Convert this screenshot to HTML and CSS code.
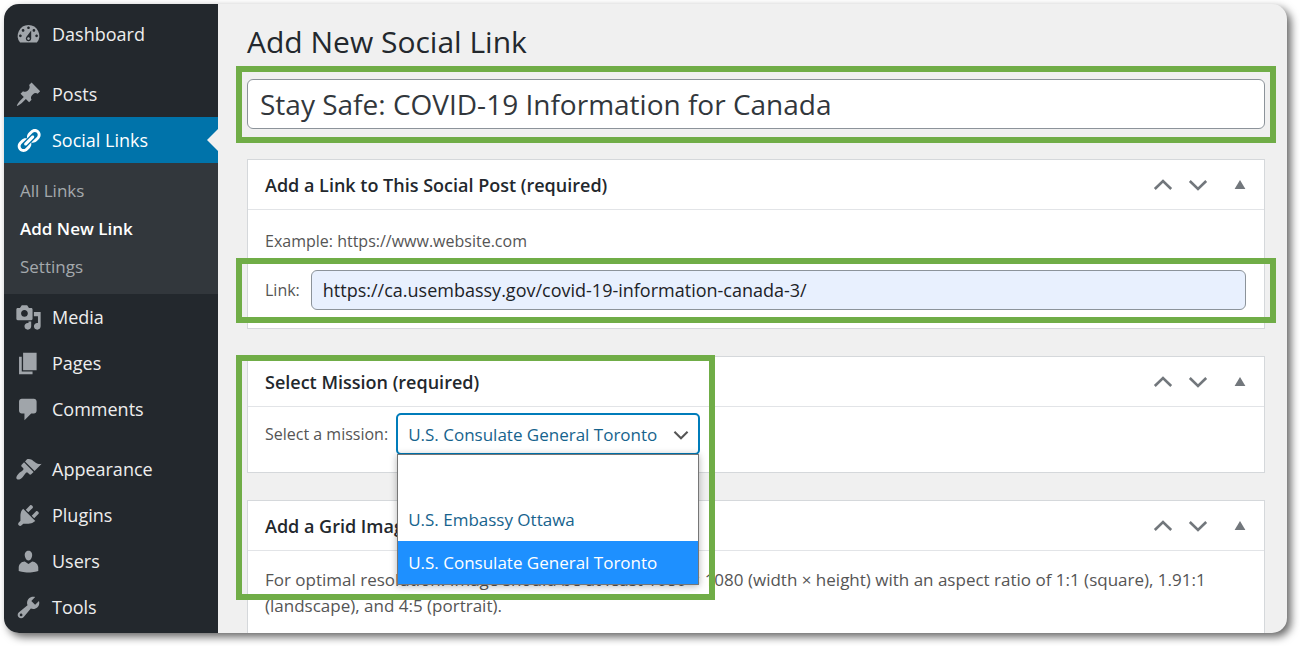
FILE: index.html
```html
<!DOCTYPE html>
<html lang="en">
<head>
<meta charset="utf-8">
<meta name="viewport" content="width=device-width, initial-scale=1">
<title>Add New Social Link</title>
<link rel="stylesheet" href="styles.css">
</head>
<body>
<svg class="sprite" aria-hidden="true">
  <symbol id="up" viewBox="0 0 20 20"><path d="M1.800 14 10 6l8.200 8" fill="none" stroke="currentColor" stroke-width="2.600"/></symbol>
  <symbol id="down" viewBox="0 0 20 20"><path d="M1.800 6 10 14l8.200-8" fill="none" stroke="currentColor" stroke-width="2.600"/></symbol>
  <symbol id="toggle" viewBox="0 0 20 20"><path d="M10 5 15.400 14H4.600z" fill="currentColor"/></symbol>
</svg>
<div class="shell">
  <nav class="sidebar" aria-label="Main menu">
    <a class="item" href="#"><svg class="icon" viewBox="0 0 20 20"><path d="M3.760 16h12.480A7.998 7.998 0 0 0 10 3a7.998 7.998 0 0 0-6.240 13zM10 4c.55 0 1 .45 1 1s-.45 1-1 1-1-.45-1-1 .45-1 1-1zM6 6c.55 0 1 .45 1 1s-.45 1-1 1-1-.45-1-1 .45-1 1-1zm8 0c.55 0 1 .45 1 1s-.45 1-1 1-1-.45-1-1 .45-1 1-1zm-5.370 5.550L12 7v6c0 1.100-.9 2-2 2s-2-.9-2-2c0-.57.24-1.080.63-1.450zM4 10c.55 0 1 .45 1 1s-.45 1-1 1-1-.45-1-1 .45-1 1-1zm12 0c.55 0 1 .45 1 1s-.45 1-1 1-1-.45-1-1 .45-1 1-1zm-5 3c0-.55-.45-1-1-1s-1 .45-1 1 .45 1 1 1 1-.45 1-1z"/></svg>Dashboard</a>
    <a class="item group" href="#"><svg class="icon" viewBox="0 0 20 20"><path d="M10.440 3.020l1.820-1.820 6.360 6.350-1.830 1.820c-1.050-.68-2.480-.57-3.410.36l-.75.75c-.92.93-1.040 2.350-.35 3.410l-1.830 1.820-2.410-2.410-2.800 2.790c-.42.42-3.380 2.710-3.800 2.290s1.860-3.390 2.280-3.810l2.790-2.790L4.100 9.360l1.830-1.820c1.050.69 2.480.57 3.400-.36l.75-.75c.93-.92 1.050-2.350.36-3.410z"/></svg>Posts</a>
    <a class="item current" href="#"><svg class="icon" viewBox="0 0 20 20"><path d="M17.740 2.760c1.680 1.690 1.680 4.410 0 6.100l-1.530 1.520c-1.120 1.120-2.700 1.470-4.140 1.090l2.620-2.610.76-.77.76-.76c.84-.84.84-2.200 0-3.040-.84-.85-2.200-.85-3.040 0l-.77.76-3.380 3.380c-.37-1.440-.02-3.020 1.100-4.140l1.520-1.530c1.690-1.680 4.420-1.680 6.100 0zM8.590 13.430l5.340-5.340c.42-.42.42-1.100 0-1.520-.44-.43-1.130-.39-1.530 0l-5.330 5.340c-.42.42-.42 1.100 0 1.520.44.43 1.130.39 1.520 0zm-.76 2.290l4.140-4.150c.38 1.440.03 3.020-1.090 4.140l-1.520 1.530c-1.690 1.680-4.410 1.680-6.100 0-1.680-1.680-1.680-4.420 0-6.100l1.530-1.520c1.120-1.120 2.700-1.470 4.140-1.100l-4.140 4.150c-.85.84-.85 2.200 0 3.050.84.84 2.200.84 3.040 0z"/></svg>Social Links</a>
    <div class="submenu">
      <a class="subitem" href="#">All Links</a>
      <a class="subitem active" href="#" aria-current="page">Add New Link</a>
      <a class="subitem" href="#">Settings</a>
    </div>
    <a class="item" href="#"><svg class="icon" viewBox="0 0 20 20"><path d="M13 11V4c0-.55-.45-1-1-1h-1.670L9 1H5L3.670 3H2c-.55 0-1 .45-1 1v7c0 .55.45 1 1 1h10c.55 0 1-.45 1-1zM7 4.500c1.380 0 2.500 1.120 2.500 2.500S8.380 9.500 7 9.500 4.500 8.380 4.500 7 5.620 4.500 7 4.500zM14 6h5v10.500c0 1.380-1.120 2.500-2.500 2.500S14 17.880 14 16.500s1.120-2.500 2.500-2.500c.17 0 .34.02.5.05V9h-3V6zm-4 8.050V13h2v3.500c0 1.380-1.120 2.500-2.500 2.500S7 17.880 7 16.500 8.120 14 9.500 14c.17 0 .34.02.5.05z"/></svg>Media</a>
    <a class="item" href="#"><svg class="icon" viewBox="0 0 20 20"><path d="M6 15V2h10v13H6zm-1 1h8v2H3V5h2v11z"/></svg>Pages</a>
    <a class="item" href="#"><svg class="icon" viewBox="0 0 20 20"><path d="M5 2h9c1.100 0 2 .9 2 2v7c0 1.100-.9 2-2 2h-2l-5 5v-5H5c-1.100 0-2-.9-2-2V4c0-1.100.9-2 2-2z"/></svg>Comments</a>
    <a class="item group" href="#"><svg class="icon" viewBox="0 0 20 20"><path d="M14.480 11.060L7.410 3.990l1.500-1.500c.5-.56 2.300-.47 3.510.32 1.210.8 1.430 1.280 2.910 2.100 1.180.64 2.450 1.260 4.450.85zm-.71.71L6.700 4.700 4.930 6.470c-.39.39-.39 1.020 0 1.410l1.060 1.060c.39.39.39 1.030 0 1.420-.6.6-1.430 1.110-2.210 1.690-.35.26-.7.53-1.010.84C1.430 14.230.4 16.080 1.400 17.070c.99 1 2.840-.03 4.180-1.360.31-.31.58-.66.85-1.020.57-.78 1.080-1.610 1.690-2.210.39-.39 1.020-.39 1.410 0l1.060 1.060c.39.39 1.020.39 1.410 0z"/></svg>Appearance</a>
    <a class="item" href="#"><svg class="icon" viewBox="0 0 20 20"><path d="M13.110 4.360L9.870 7.600 8 5.730l3.240-3.240c.35-.34 1.050-.2 1.560.32.52.51.66 1.210.31 1.550zm-8 1.770l.91-1.120 9.010 9.010-1.190.84c-.71.71-2.630 1.160-3.820 1.160H6.140L4.900 17.260c-.59.59-1.540.59-2.120 0-.59-.58-.59-1.530 0-2.120l1.240-1.240v-3.880c0-1.130.4-3.190 1.090-3.890zm7.260 3.970l3.240-3.240c.34-.35 1.040-.21 1.550.31.52.51.66 1.210.31 1.550l-3.240 3.250z"/></svg>Plugins</a>
    <a class="item" href="#"><svg class="icon" viewBox="0 0 20 20"><path d="M10 9.250c-2.270 0-2.730-3.440-2.730-3.440C7 4.020 7.820 2 9.970 2c2.160 0 2.980 2.020 2.710 3.810 0 0-.41 3.440-2.680 3.440zm0 2.570L12.720 10c2.390 0 4.520 2.330 4.520 4.530v2.490s-3.650 1.130-7.240 1.130c-3.650 0-7.240-1.130-7.240-1.130v-2.490c0-2.250 1.940-4.480 4.470-4.480z"/></svg>Users</a>
    <a class="item" href="#"><svg class="icon" viewBox="0 0 20 20"><path d="M16.680 9.770c-1.340 1.340-3.300 1.670-4.950.99l-5.410 6.520c-.99.99-2.590.99-3.580 0s-.99-2.590 0-3.570l6.520-5.420c-.68-1.650-.35-3.610.99-4.950 1.280-1.280 3.120-1.620 4.720-1.060l-2.890 2.890 2.820 2.820 2.860-2.870c.53 1.580.18 3.390-1.080 4.650zM3.810 16.210c.4.39 1.040.39 1.430 0 .4-.4.4-1.040 0-1.430-.39-.4-1.030-.4-1.430 0-.39.39-.39 1.030 0 1.430z"/></svg>Tools</a>
  </nav>
  <main class="main">
    <h1 class="page-title">Add New Social Link</h1>
    <div class="title-field marked">
      <input class="title-input" type="text" aria-label="Title" value="Stay Safe: COVID-19 Information for Canada">
    </div>

    <section class="box">
      <header class="box-head">
        <h2 class="box-title">Add a Link to This Social Post (required)</h2>
        <button class="ctl" type="button" aria-label="Move up"><svg viewBox="0 0 20 20"><use href="#up"/></svg></button>
        <button class="ctl" type="button" aria-label="Move down"><svg viewBox="0 0 20 20"><use href="#down"/></svg></button>
        <button class="ctl toggle" type="button" aria-label="Toggle panel"><svg viewBox="0 0 20 20"><use href="#toggle"/></svg></button>
      </header>
      <div class="box-body">
        <p class="hint">Example: https://www.website.com</p>
        <div class="link-row marked">
          <label for="link">Link:</label>
          <input class="link-input" id="link" type="text" value="https://ca.usembassy.gov/covid-19-information-canada-3/">
        </div>
      </div>
    </section>

    <section class="box mission marked">
      <header class="box-head">
        <h2 class="box-title">Select Mission (required)</h2>
        <button class="ctl" type="button" aria-label="Move up"><svg viewBox="0 0 20 20"><use href="#up"/></svg></button>
        <button class="ctl" type="button" aria-label="Move down"><svg viewBox="0 0 20 20"><use href="#down"/></svg></button>
        <button class="ctl toggle" type="button" aria-label="Toggle panel"><svg viewBox="0 0 20 20"><use href="#toggle"/></svg></button>
      </header>
      <div class="box-body mission-body">
        <label for="mission">Select a mission:</label>
        <div class="picker">
          <select class="picker-select" id="mission">
            <option></option>
            <option>U.S. Embassy Ottawa</option>
            <option selected>U.S. Consulate General Toronto</option>
          </select>
          <svg class="picker-arrow" viewBox="0 0 20 20" aria-hidden="true"><use href="#down"/></svg>
          <ul class="menu" role="listbox" aria-label="Missions">
            <li class="option" role="option"></li>
            <li class="option" role="option">U.S. Embassy Ottawa</li>
            <li class="option selected" role="option" aria-selected="true">U.S. Consulate General Toronto</li>
          </ul>
        </div>
      </div>
    </section>

    <section class="box last">
      <header class="box-head">
        <h2 class="box-title">Add a Grid Image</h2>
        <button class="ctl" type="button" aria-label="Move up"><svg viewBox="0 0 20 20"><use href="#up"/></svg></button>
        <button class="ctl" type="button" aria-label="Move down"><svg viewBox="0 0 20 20"><use href="#down"/></svg></button>
        <button class="ctl toggle" type="button" aria-label="Toggle panel"><svg viewBox="0 0 20 20"><use href="#toggle"/></svg></button>
      </header>
      <div class="box-body note-body">
        <p class="note">For optimal resolution. Image should be at least 1080 × 1080 (width × height) with an aspect ratio of 1:1 (square), 1.91:1 (landscape), and 4:5 (portrait).</p>
      </div>
    </section>
  </main>
</div>
</body>
</html>
```
FILE: styles.css
```css
*, *::before, *::after { box-sizing: border-box; }

body {
  margin: 0;
  padding: 4px 13px 13px 4px;
  background: #fff;
  color: #555;
  font-family: "Open Sans", "Noto Sans", sans-serif;
  font-size: 16px;
  line-height: 26px;
}

input, select, button { font: inherit; }

.sprite { display: none; }

.shell {
  display: grid;
  grid-template-columns: 214px 1fr;
  min-height: calc(100vh - 17px);
  overflow: hidden;
  border-radius: 15px;
  background: #f0f0f0;
  box-shadow: 4px 4px 8px rgba(0, 0, 0, 0.6);
}

/* Sidebar */
.sidebar {
  padding-top: 7px;
  background: #23282d;
}

.item {
  display: flex;
  align-items: center;
  gap: 10px;
  height: 46px;
  padding-left: 11px;
  color: #eee;
  font-size: 18px;
  text-decoration: none;
}

.item.group { margin-top: 14px; }

.icon {
  width: 27px;
  height: 27px;
  fill: #a0a5aa;
}

.item.current {
  position: relative;
  background: #0073aa;
  color: #fff;
}

.item.current .icon { fill: #fff; }

.item.current::after {
  content: "";
  position: absolute;
  right: 0;
  top: 12px;
  border: 11px solid transparent;
  border-left: 0;
  border-right-color: #f0f0f0;
}

.submenu {
  padding: 9px 0 8px 16px;
  background: #32373c;
}

.subitem {
  display: block;
  color: #a4a9ad;
  font-size: 17px;
  line-height: 38px;
  text-decoration: none;
}

.subitem.active {
  color: #fff;
  font-weight: 600;
}

/* Main column */
.main {
  display: flex;
  flex-direction: column;
  padding: 15px 22px 0 29px;
}

.page-title {
  margin: 0 0 14px;
  color: #23282d;
  font-size: 30px;
  font-weight: 400;
  line-height: 46px;
}

.title-field { margin-bottom: 30px; }

.title-input {
  display: block;
  width: 100%;
  height: 50px;
  padding: 0 12px;
  border: 1px solid #8c939a;
  border-radius: 6px;
  background: #fff;
  color: #32373c;
  font-size: 28px;
}

/* Green call-out frames */
.marked { position: relative; }

.marked::after {
  content: "";
  position: absolute;
  z-index: 3;
  border: 6px solid #70ad47;
  pointer-events: none;
}

.title-field::after { inset: -13px -11px -14px; }
.link-row::after { inset: -12px -30px -13px -29px; }

.mission::after {
  top: -2px;
  left: -12px;
  width: 479px;
  height: 245px;
}

/* Panels */
.box {
  margin-bottom: 27px;
  border: 1px solid #d5d8db;
  background: #fff;
}

.box.last {
  flex: 1;
  margin-bottom: 0;
  border-bottom: 0;
}

.box-head {
  display: flex;
  align-items: center;
  height: 50px;
  padding-right: 14px;
  padding-left: 17px;
  border-bottom: 1px solid #e2e4e7;
}

.box-title {
  flex: 1;
  margin: 0;
  color: #23282d;
  font-size: 18px;
  font-weight: 600;
}

.ctl {
  display: flex;
  margin-left: 15px;
  padding: 0;
  border: 0;
  background: none;
  color: #72777c;
}

.ctl.toggle { margin-left: 22px; }

.ctl svg {
  width: 20px;
  height: 20px;
}

.box-body { padding: 18px 18px 18px 17px; }

.hint { margin: 0; }

.note-body {
  padding-top: 16px;
  padding-bottom: 0;
}

.note {
  margin: 0;
  font-size: 17px;
}

.link-row {
  display: flex;
  align-items: center;
  gap: 11px;
  margin-top: 16px;
}

.link-input {
  flex: 1;
  min-width: 0;
  height: 40px;
  padding: 0 11px;
  border: 1px solid #8c939a;
  border-radius: 6px;
  background: #e8f0fe;
  color: #1d2327;
  font-size: 18px;
}

.mission-body {
  display: flex;
  align-items: center;
  gap: 8px;
  padding-top: 6px;
  padding-bottom: 17px;
}

.picker {
  position: relative;
  width: 304px;
}

.picker-select {
  display: block;
  width: 100%;
  height: 42px;
  padding: 2px 28px 0 10px;
  appearance: none;
  border: 2px solid #007cba;
  border-radius: 5px;
  background: #fff;
  color: #16638d;
  font-size: 17px;
}

.picker-arrow {
  position: absolute;
  top: 14px;
  right: 11px;
  width: 16px;
  height: 16px;
  color: #555;
  pointer-events: none;
}

.menu {
  position: absolute;
  z-index: 2;
  top: 41px;
  right: 1px;
  left: 1px;
  margin: 0;
  padding: 0;
  border: 1px solid #767676;
  background: #fff;
  box-shadow: 0 1px 7px rgba(0, 0, 0, 0.3);
  list-style: none;
}

.option {
  height: 43px;
  padding-left: 10px;
  color: #16638d;
  font-size: 17px;
  line-height: 43px;
  white-space: nowrap;
}

.option.selected {
  background: #1e90ff;
  color: #fff;
}
```
